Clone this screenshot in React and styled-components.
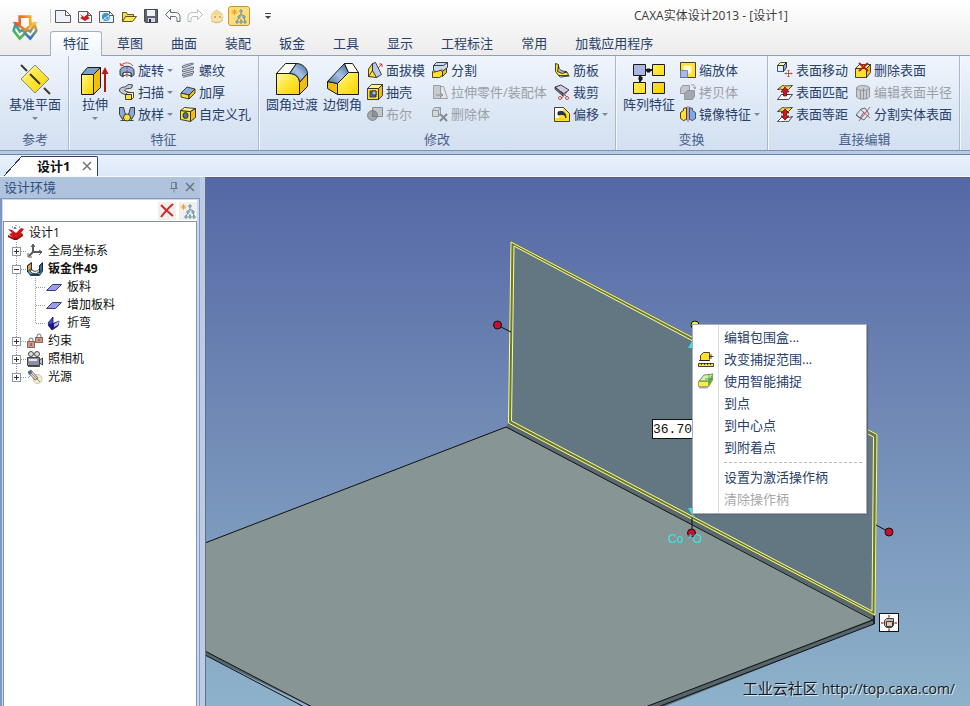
import React, { useState } from "react";
import styled, { createGlobalStyle, css } from "styled-components";

const UI_FONT = `"Open Sans", "Noto Sans CJK SC", sans-serif`;
const INK = "#28406a";
const MUTED = "#9a9fa6";

const GlobalStyle = createGlobalStyle`
  *, *::before, *::after { box-sizing: border-box; }
  html, body, #root { height: 100%; margin: 0; }
  body { overflow: hidden; font: 13px/16px ${UI_FONT}; color: ${INK}; }
  button { font: inherit; color: inherit; background: none; border: 0; padding: 0; margin: 0; white-space: nowrap; }
  ul, ol { list-style: none; margin: 0; padding: 0; }
  svg { display: block; flex: none; }
`;

/* ---------- icons ---------- */

const Glyph = ({ size = 16, box = size, label, children }) => (
  <svg width={size} height={size} viewBox={`0 0 ${box} ${box}`} aria-hidden={label ? undefined : true} aria-label={label}>
    {children}
  </svg>
);

const K = "#1b1b14";
const Y = "#ffe02a";
const YD = "#efbe10";
const YL = "#fff68c";
const B = "#8fa9d8";
const BD = "#5f80b4";

const treeArt = (
  <g fill="none" stroke="#477f96">
    <path d="M10 4v3M8 9l1-2h3l1 2M6 13l2-3M14 13l-1-3M10 13v-2" />
    <path d="M9 2h2v2h-2zM7 8h2v2h-2zM12 8h2v2h-2zM5 13h2v2h-2zM9 13h2v2h-2zM13 13h2v2h-2z" fill="#e9f2f5" />
    <path d="M3.500 1v6M.5 4h6M1.500 2l4 4M5.500 2l-4 4" stroke="#e39a18" />
  </g>
);

const ICONS = {
  newDoc: <path d="M.5 2.500h10l5 5v7h-15zM10.500 2.500v5h5" fill="#eff1f8" stroke="#33343c" />,
  newPart: (
    <g>
      <path d="M1.500 3.500h9l4 4v7h-13zM10.500 3.500v4h4" fill="#f8f9fc" stroke="#33343c" />
      <path d="M3 6l4 3 5-4-1 4 2 1-5 3-5-3 2-1z" fill="#c81c1c" />
    </g>
  ),
  newDrawing: (
    <g>
      <path d="M.5 3.500h10l4 4v7h-14zM10.500 3.500v4h4" fill="#e9f4fb" stroke="#33343c" />
      <circle cx="7" cy="9" r="4" fill="#3b92c6" />
      <path d="M4 12l7-6M6 9a2 2 0 103-1" stroke="#e4f3fb" fill="none" />
    </g>
  ),
  open: (
    <g stroke="#3a3308">
      <path d="M1.500 13.500v-9h4l1 2h6v3" fill="#f6d94b" />
      <path d="M1.500 13.500l3-5h11l-4 5z" fill="#ffe45a" />
    </g>
  ),
  save: (
    <g>
      <path d="M1.500 1.500h13v13h-12l-1-1z" fill="#5f6574" stroke="#2b2e38" />
      <path d="M4 2h8v6H4z" fill="#f0f1f5" />
      <path d="M5 10h7v4H5z" fill="#d6d9e2" />
      <path d="M6 11h2v3H6z" fill="#2b2e38" />
    </g>
  ),
  undo: <path d="M.5 6.500l5-5v3h5c3 0 4.500 2 4.500 4v5h-3v-2c0-2-1-3-2-3h-4.500v3z" fill="#fbfcfe" stroke="#3d4454" />,
  redo: <path d="M15.500 6.500l-5-5v3h-5c-3 0-4.500 2-4.500 4v5h3v-2c0-2 1-3 2-3h4.500v3z" fill="#fbfcfe" stroke="#a9adb5" />,
  ball: (
    <g>
      <circle cx="8" cy="9" r="6" fill="#f6e4a6" stroke="#dfc98e" />
      <path d="M3 7l2-4 3-2 2 3 3 3z" fill="#f0d998" />
      <circle cx="6" cy="9" r="1" fill="#b9a36a" />
      <circle cx="11" cy="9" r="1" fill="#b9a36a" />
      <path d="M2 13c3 2 9 2 12-1" stroke="#c9b98c" fill="none" />
    </g>
  ),
  treeView: treeArt,
  revolve: (
    <g>
      <path d="M1 8c2-5 12-5 14 0v5l-3 2v-4c-1-1-7-1-8 0v4l-3-2z" fill={B} stroke={K} />
      <path d="M4 11c1-1 7-1 8 0v3l-3-1-2 0-3 1z" fill="#e9eefa" stroke={K} />
      <path d="M2 3c4-3 9-3 12 1M1 1l1 3 3-1" stroke="#c81c1c" fill="none" />
      <path d="M8 5v10" stroke="#c81c1c" strokeDasharray="2 1" />
    </g>
  ),
  sweep: (
    <g stroke={K}>
      <path d="M.5 6c1-4 5-2 7-4 1-2 4-2 6-1l-1 3c-2 1-6 0-7 2 0 2 4 1 5 3l-4 2c-3-2-6-2-6-5z" fill="#c3cadb" />
      <path d="M6.500 10.500h6v5h-6z" fill={Y} />
      <path d="M6.500 10.500l2-2h6v5l-2 2v-5z" fill={YL} />
    </g>
  ),
  loft: (
    <g stroke={K}>
      <path d="M.5 1.500h4l2 7-3 5-3-5z" fill={B} />
      <path d="M15.500 1.500h-4l-2 7 3 5 3-5z" fill={B} />
      <path d="M1.500 14.500h13" fill="none" />
      <circle cx="8" cy="11.500" r="3.500" fill={Y} />
    </g>
  ),
  thread: (
    <g stroke="#4b5362" fill="#dce1ec">
      <path d="M3.500 1h9v14h-9z" stroke="none" />
      <path d="M2.500 4l10-3 1 1-11 4zM2.500 8l11-3v2l-11 3zM2.500 12l11-3v2l-11 3zM3 15.500l10-3" />
    </g>
  ),
  thicken: (
    <g stroke={K}>
      <path d="M1 9l6-6 8 2-6 6z" fill={B} />
      <path d="M1 9l8 2v4l-8-2z" fill={Y} />
      <path d="M9 11l6-6v4l-6 6z" fill={YD} />
    </g>
  ),
  hole: (
    <g stroke={K}>
      <path d="M.5 4.500l10 1v10l-10-2z" fill={Y} />
      <path d="M.5 4.500l4-3 11 1-5 3z" fill={YL} />
      <path d="M10.500 5.500l5-3v9l-5 4z" fill={YD} />
      <ellipse cx="5.500" cy="9.500" rx="2.500" ry="3" fill="#4c77ac" />
    </g>
  ),
  draft: (
    <g stroke={K}>
      <path d="M1.500 7l4-5.500v12l-4 1z" fill={Y} />
      <path d="M5.500 1.500l3-1 6 12-5 3-4-2z" fill="#b6c8ec" />
      <path d="M1.500 14.500l4-6 4 7z" fill={Y} />
      <path d="M11 6l4-4M12 2h3v3" stroke="#c81c1c" fill="none" />
    </g>
  ),
  shell: (
    <g stroke={K}>
      <path d="M.5 4.500h11v11H.5z" fill={Y} />
      <path d="M.5 4.500l4-4h11l-4 4z" fill={YL} />
      <path d="M11.500 4.500l4-4v11l-4 4z" fill={YD} />
      <path d="M3 7h6v6H3z" fill={BD} />
      <path d="M5 7v4h4V7z" fill="#a8c0ec" />
    </g>
  ),
  boolean: (
    <g stroke="#777b82">
      <circle cx="5.500" cy="9.500" r="5" fill="#a3a7ae" />
      <path d="M5.500 1.500h10v9h-10z" fill="#c3c6cb" />
      <path d="M6 4.500a5 5 0 014.500 6H5.500z" fill="#8d9198" />
    </g>
  ),
  split: (
    <g stroke={K}>
      <path d="M.5 9.500c3 2 5-2 8-1l2 1v4l-3 2h-7z" fill={Y} />
      <path d="M10.500 9.500l4-4v5l-4 4z" fill={YD} />
      <path d="M1.500 3.500l3-3h11v5l-4 3c-3-2-6 3-10 0z" fill="#c9d9f6" />
      <path d="M1.500 3.500h10l4-3" fill="none" />
    </g>
  ),
  stretch: (
    <g stroke="#8d9197" fill="#c8cbd0">
      <path d="M1.500 1.500h7v13h-7z" />
      <path d="M8.500 2.500l3 0 4 12h-7z" fill="#e4e6e9" />
      <path d="M4 11h6M8 9l3 2-3 2" stroke="#777b82" />
    </g>
  ),
  deleteBody: (
    <g stroke="#85898f" fill="#d4d7db">
      <path d="M.5 4.500h6v6h-6zM.5 4.500l2-3h6l-2 3M6.500 10.500l2-3v-6" />
      <path d="M8 8l7 7M15 8l-7 7" strokeWidth="2" />
    </g>
  ),
  rib: (
    <g stroke={K}>
      <path d="M1.500 1.500l3 1v7l9 1 1 3h-10l-3-4z" fill={Y} />
      <path d="M4.500 3.500c0 4 3 6 8 6l-4 2-5-2z" fill="#b5bccb" />
      <path d="M4.500 13.500l2 1.500 9-1" fill="none" />
    </g>
  ),
  trim: (
    <g stroke={K}>
      <path d="M1 3l6-2 8 5-6 4z" fill="#d3c9e6" />
      <path d="M1 3l8 7v2L1 5z" fill="#8289a6" />
      <path d="M7 7l7 7M13 8l-6 7" stroke="#8a3530" fill="none" />
      <circle cx="13" cy="14" r="1.500" fill="#fff" stroke="#a02a2a" />
      <circle cx="6" cy="14" r="1.500" fill="#fff" stroke="#a02a2a" />
    </g>
  ),
  offset: (
    <g>
      <path d="M.5 1.500h9l6 6v8H.5z" fill={Y} stroke={K} />
      <path d="M1 2h8v4H5v6H1z" fill="#fff" />
      <path d="M4 6c4-2 8 0 8 6-1-4-4-4-8-3z" fill="#203566" stroke="#1b1b14" />
      <path d="M3 13h9" stroke={YD} />
    </g>
  ),
  scale: (
    <g stroke={K}>
      <path d="M.5.5h15v15H.5z" fill={Y} />
      <path d="M3.500 3.500h8v8h-8z" fill="#fbf8d8" stroke="none" />
      <path d="M.5 8.500h7v7h-7z" fill="#aab8e8" stroke="#6673ac" />
    </g>
  ),
  copyBody: (
    <g stroke="#84888e" fill="#c4c7cc">
      <path d="M.5 4.500l2-3h7v5l-2 3h-7z" />
      <path d="M4.500 9.500l3-3h7v6l-2 3h-8z" fill="#a3a7ad" />
      <path d="M11 1c3-1 4 1 4 3M13 3l2 2 1-2" fill="none" />
    </g>
  ),
  mirror: (
    <g>
      <path d="M.5 6.500l3-2v-2l3-1v12l-3 1-3-2z" fill={Y} stroke={K} />
      <path d="M15.500 6.500l-3-2v-2l-3-1v12l3 1 3-2z" fill="#7ea9e8" stroke="#203566" />
      <path d="M8 0v16" stroke="#c81c1c" />
    </g>
  ),
  moveFace: (
    <g>
      <path d="M.5 3.500h6v6h-6z" fill="#e3ecfb" stroke="#203566" />
      <path d="M.5 3.500l3-3h6l-3 3z" fill={YL} stroke={K} />
      <path d="M6.500 3.500l3-3v5l-3 4z" fill={B} stroke={K} />
      <path d="M11.500 8v7M8 11.500h7M10.500 9l1-1 1 1M10.500 14l1 1 1-1M9 10.500l-1 1 1 1M14 10.500l1 1-1 1" stroke="#b8322c" fill="none" />
    </g>
  ),
  matchFace: (
    <g stroke={K}>
      <path d="M.5 15.500l4-5h11l-4 5z" fill="#fff" />
      <path d="M.5 5.500l5-4c3 1 6 0 10 0l-4 4c-4 1-7-1-11 0z" fill="#ffd94a" />
      <path d="M8 3l4 5H9.500v4h-3V8H4z" fill="#c81c1c" stroke="#6d1010" />
    </g>
  ),
  offsetFace: (
    <g stroke={K}>
      <path d="M.5 15.500l4-4c4-1 7 1 11-1l-4 5c-4-1-7 1-11 0z" fill="#fff" />
      <path d="M.5 5.500l5-4c3 1 6 0 10 0l-4 4c-4 1-7-1-11 0z" fill="#ffd94a" />
      <path d="M8 3l4 4H9.500v3H12l-4 4-4-4h2.500V7H4z" fill="#c81c1c" stroke="#6d1010" />
    </g>
  ),
  deleteFace: (
    <g stroke={K}>
      <path d="M.5 6.500h11v9H.5z" fill={Y} />
      <path d="M.5 6.500l4-4h11l-4 4z" fill={YL} />
      <path d="M11.500 6.500l4-4v8l-4 5z" fill={YD} />
      <path d="M4 1l9 8M13 1l-9 8" stroke="#b8201c" strokeWidth="2" />
    </g>
  ),
  editRadius: (
    <g stroke="#82868c" fill="#c9ccd1">
      <path d="M1.500 4v9c3 3 10 3 13 0V4" />
      <ellipse cx="8" cy="4" rx="6.500" ry="2.500" />
      <path d="M5.500 7v8M8.500 4v11M11.500 7v8" />
    </g>
  ),
  splitFace: (
    <g>
      <path d="M1 9l5-6 4-1 4 6-5 6-4-2z" fill="#dbe2f2" stroke="#474c58" />
      <path d="M1 9l4 3 4-6" fill="none" stroke="#474c58" />
      <path d="M15 1L4 15M6 4l9 8" stroke="#b83a34" fill="none" />
    </g>
  ),
  partRoot: (
    <g>
      <path d="M0 4l4 1 4 3 5-5 3 1-3 4 2 1-6 5H6L1 9l3-1z" fill="#cf1717" />
      <path d="M0 10l6 3h3l6-4v2l-6 4H6l-6-3z" fill="#8d0d0d" />
      <path d="M6 4l1-2 1 2M4 2h1M11 2h1M8 0v1" fill="none" stroke="#333" />
    </g>
  ),
  axes: (
    <g fill="none" stroke="#5b5b5b" strokeWidth="2">
      <path d="M6 2v8M6 9h9M6 9l-4 4" />
      <path d="M4 4l2-3 2 3M12 7l3 2-3 3M1 10v4h4" strokeWidth="1" />
    </g>
  ),
  sheet: (
    <g stroke="#1b1b14">
      <path d="M.5 4.500l4-3v7l-1 2c2 3 8 3 9-1v-5l3-3v9l-3 4h-9l-3-4z" fill="#4fa8d6" />
      <path d="M.5 5l4-3v5l-4 4z" fill="#e8a24a" />
      <path d="M5 1h7v8c0 3-6 3-7 0z" fill="#fff" stroke="none" />
      <path d="M4.500 8c1 3 6 3 8 0M3.500 13.500h9" fill="none" />
      <path d="M12.500 5l3-3v7l-3 3z" fill="#2f6f9d" />
    </g>
  ),
  plate: <path d="M.5 11.500l6-6h9l-6 6z" fill="#9a9cf0" stroke="#16184a" />,
  bend: (
    <g>
      <path d="M2 8l5-6v7l-1 5z" fill="#3f46d8" stroke="#11134a" />
      <path d="M6 9l7-3-1 5-6 4-4-5z" fill="#171a90" stroke="#11134a" />
      <path d="M8 9l5-3-1 4-4 2z" fill="#b8baf8" />
    </g>
  ),
  locks: (
    <g>
      <path d="M2 9V7a2 2 0 014 0v2M10 5V3a2 2 0 014 0v2" fill="none" stroke="#5b4a46" />
      <path d="M.5 8.500h7v6h-7zM8.500 4.500h7v5h-7z" fill="#cf9a8c" stroke="#6d4a42" />
      <path d="M4 10v3M12 6v2" stroke="#6d1d16" />
    </g>
  ),
  camera: (
    <g>
      <circle cx="4" cy="3" r="2.500" fill="#ddd" stroke="#222" />
      <circle cx="10" cy="3" r="2.500" fill="#ddd" stroke="#222" />
      <path d="M.5 6.500h12v8H.5z" fill="#8b8fa2" stroke="#222" />
      <path d="M2 8h8v2H2z" fill="#e4e5ec" />
      <path d="M12.500 9l3-2v7l-3-2z" fill="#b9bbc8" stroke="#222" />
      <path d="M1 15.500h12" stroke="#222" />
    </g>
  ),
  light: (
    <g>
      <circle cx="10.500" cy="10" r="4.500" fill="#f5ead2" stroke="#c9b694" />
      <path d="M1 3l3-2 7 8-3 2z" fill="#e6d6d0" stroke="#8a4a42" />
      <path d="M1 3l3-2 1 3-3 2z" fill="#3f6d9a" />
      <path d="M4 4l9 9M1 9l3-3" stroke="#3f8f78" />
    </g>
  ),
  snapRange: (
    <g stroke={K}>
      <path d="M2.500 4.500l3-3h6v7l-1 1h-8z" fill={Y} />
      <path d="M11.500 5.500h4M13 3v5M1 9.500h11" />
      <path d="M.5 12.500h15v3H.5z" fill={Y} />
      <path d="M3.500 12v2M6.500 12v2M9.500 12v2M12.500 12v2" />
    </g>
  ),
  smartSnap: (
    <g>
      <path d="M1 8l5-6 9-1-4 7z" fill="#d6f0b8" stroke="#4d7a2a" />
      <path d="M.5 8.500h10v5H.5z" fill="#f2ee4c" stroke="#8f8b2a" />
      <path d="M11 8l4-7v6l-4 7z" fill="#8fa04d" />
      <path d="M1 14.500h9" stroke="#a9a9a9" strokeWidth="2" />
      <path d="M11 2v8M7 6h8" stroke="#14a83a" />
    </g>
  ),
  close: <path d="M4 4l8 8M12 4l-8 8" stroke="#6c7482" strokeWidth="1.500" />,
  pin: <path d="M5.500 3.500h5v6h-5zM9.500 3.500v6M4 9.500h8M8 9.500v4" fill="none" stroke="#6c7482" />,
  clear: <path d="M2 2c4 4 7 7 12 11M14 1C9 5 6 9 2 14" fill="none" stroke="#cf2a24" strokeWidth="2" />,
  moveBox: (
    <g>
      <path d="M3.500 5.500l2-2h7v7l-2 2h-5l-2-2z" fill="#c9b4b0" stroke={K} />
      <path d="M5.500 6.500h6v5h-6z" fill="#d9c8c4" stroke={K} />
      <path d="M8 0v3M8 13v3M0 8h3M13 8h3M7 1h2M7 15h2M1 7v2M15 7v2" stroke="#b8201c" />
    </g>
  ),
};

const Icon = ({ name }) => (
  <Glyph>
    <g strokeWidth=".8">{ICONS[name]}</g>
  </Glyph>
);

const BIG = {
  plane: (
    <g>
      <path d="M2 16L16 2l14 14-14 14z" fill="url(#gold)" stroke="#7c8791" />
      <path d="M2 2l6 6M11 11l10 10M25 25l6 6" stroke="#3d3a2a" strokeWidth="2" />
    </g>
  ),
  extrude: (
    <g stroke={K}>
      <path d="M2.500 11.500h12v20h-12z" fill="url(#gold)" />
      <path d="M2.500 11.500l6-7h13l-7 7z" fill="#7da0cc" />
      <path d="M14.500 11.500l7-7v20l-7 7z" fill={YD} />
      <path d="M26 29V8" stroke="#b81414" strokeWidth="2" />
      <path d="M22.500 11L26 4l3.500 7z" fill="#c01818" stroke="none" />
    </g>
  ),
  fillet: (
    <g stroke={K}>
      <path d="M.5 10.500h13c6 0 10 4 10 9v12H.5z" fill="url(#gold)" />
      <path d="M.5 10.500l9-10h11l-7 10z" fill="#fffef2" />
      <path d="M13.500 10.500l7-10c6 0 11 5 11 10l-8 9c0-5-4-9-10-9z" fill="url(#steel)" />
      <path d="M23.500 19.500l8-9v13l-8 8z" fill={YD} />
    </g>
  ),
  chamfer: (
    <g stroke={K}>
      <path d="M10.500 20.500l11-11h10v22h-21z" fill="url(#gold)" />
      <path d="M.5 18.500l10 2v11l-10-6z" fill={YD} />
      <path d="M.5 18.500l17-18 4 9-11 11z" fill="url(#steel)" />
      <path d="M17.500.5h8l6 9h-10z" fill="#fffef2" />
    </g>
  ),
  pattern: (
    <g stroke={K}>
      <path d="M12 7h8M7 12v8" strokeWidth="2" />
      <path d="M.5 1.500h12v11H.5z" fill="#a9b6e6" />
      <path d="M19.500 1.500h12v11h-12zM.5 19.500h12v11H.5zM19.500 19.500h12v11h-12z" fill="url(#gold)" />
      <path d="M14 6h3v3h-3zM6 14h3v3H6z" fill={K} />
    </g>
  ),
};

const Logo = () => (
  <Glyph size={28} box={32} label="CAXA">
    <defs>
      <linearGradient id="lg1" x1="0" x2="1"><stop offset="0" stopColor="#e8502a" /><stop offset="1" stopColor="#f6c52c" /></linearGradient>
      <linearGradient id="lg2" x1="0" x2="0" y2="1"><stop offset="0" stopColor="#2f9fb2" /><stop offset="1" stopColor="#57b847" /></linearGradient>
      <linearGradient id="lg3" x1="0" x2="0" y2="1"><stop offset="0" stopColor="#f0a82c" /><stop offset="1" stopColor="#1f76c8" /></linearGradient>
    </defs>
    <g fill="#fdfdfb" strokeWidth="3">
      <path d="M5 12l-2 7 7 9 6-6-2-4-4 2z" stroke="url(#lg2)" />
      <path d="M27 12l2 7-7 9-6-6 2-4 4 2z" stroke="url(#lg3)" />
      <path d="M10 3h12v8h4l-10 7-10-7h4z" stroke="url(#lg1)" />
    </g>
  </Glyph>
);

/* ---------- title bar and ribbon tabs ---------- */

const Window = styled.div`
  display: flex;
  flex-direction: column;
  height: 100vh;
  background: #c9d8ec;
`;

const Head = styled.header`
  display: flex;
  flex: none;
  background: linear-gradient(#ffffff, #f6f6f6 45%, #ececee);
  border-bottom: 1px solid #8ea0bb;
`;

const AppButton = styled.button`
  flex: none;
  width: 50px;
  display: grid;
  place-items: center;
`;

const HeadMain = styled.div`
  flex: 1;
  min-width: 0;
`;

const TitleBar = styled.div`
  display: grid;
  grid-template-columns: 1fr auto 1fr;
  align-items: center;
  height: 31px;
`;

const QuickAccess = styled.div`
  display: flex;
  align-items: center;
  gap: 6px;
  padding-left: 4px;
  border-left: 1px solid #c5c8ce;
  height: 14px;
`;

const QuickButton = styled.button`
  display: grid;
  place-items: center;
  width: 16px;
  height: 20px;
  ${(p) => p.$active && css`
    width: 22px;
    border: 1px solid #c9962c;
    border-radius: 3px;
    background: #ffdd7a;
    margin: 0 4px 0 -3px;
  `}
`;

const Title = styled.h1`
  grid-column: 3;
  margin: 0;
  padding-left: 124px;
  font-size: 12px;
  font-weight: 400;
  line-height: 16px;
  color: #3c3c3c;
  white-space: nowrap;
`;

const TabRow = styled.div`
  display: flex;
  gap: 2px;
`;

const Tab = styled.button`
  height: 24px;
  padding: 0 12px 2px;
  border: 1px solid transparent;
  border-bottom: 0;
  border-radius: 3px 3px 0 0;
  ${(p) => p.$active && css`
    position: relative;
    height: 25px;
    padding-bottom: 3px;
    border-color: #9fb1cb;
    background: linear-gradient(#ffffff, #eef4fc);
    margin-bottom: -1px;
  `}
`;

/* ---------- ribbon ---------- */

const Ribbon = styled.section`
  display: flex;
  flex: none;
  height: 95px;
  background: linear-gradient(#f0f5fc, #dfe9f6 50%, #d3e0f1);
  border-bottom: 1px solid #8093b0;
`;

const Group = styled.section`
  border-right: 1px solid #a9b8cf;
  box-shadow: 1px 0 0 #f4f8fd;
  padding: 3px 7px 0 ${(p) => (p.$lead ? "9px" : "7px")};
`;

const GroupBody = styled.div`
  display: flex;
  gap: 5px;
  min-height: 66px;
`;

const GroupLabel = styled.h2`
  margin: 0;
  padding-top: 5px;
  font-size: 13px;
  font-weight: 400;
  line-height: 18px;
  text-align: center;
  color: #47608a;
`;

const Columns = styled.div`
  display: flex;
  gap: 7px;
`;

const Column = styled.div`
  display: flex;
  flex-direction: column;
  align-items: flex-start;
`;

const SmallButton = styled.button`
  display: flex;
  align-items: center;
  gap: 3px;
  height: 22px;
  &:disabled { color: ${MUTED}; }
`;

const BigButton = styled.button`
  display: flex;
  flex-direction: column;
  align-items: center;
  gap: 1px;
  min-width: 38px;
  padding-top: 4px;
`;

const Caret = styled.span`
  border: 3px solid transparent;
  border-top-color: #7e8795;
  border-bottom-width: 0;
  margin-top: ${(p) => (p.$below ? "4px" : "0")};
`;

/* ---------- document tabs ---------- */

const DocTabs = styled.nav`
  display: flex;
  flex: none;
  height: 26px;
  padding: 5px 0 0 4px;
  background: linear-gradient(#b9cbe4 3px, #6f84a5 3px, #6f84a5 4px, #e9f1fb 4px, #dce8f7);
  border-bottom: 1px solid #f4f7fb;
`;

const DocTab = styled.div`
  display: flex;
  align-items: center;
  height: 20px;
`;

const DocSlope = styled.span`
  width: 18px;
  height: 20px;
  background: linear-gradient(to bottom right, transparent 48%, #33415a 48%, #33415a 52%, #fff 52%);
`;

const DocBody = styled.div`
  display: flex;
  align-items: center;
  gap: 9px;
  height: 20px;
  padding: 0 2px 2px 15px;
  background: #fff;
  border: 1px solid #33415a;
  border-width: 1px 1px 0 0;
  border-top-right-radius: 2px;
  color: #111;
  font-weight: 700;
`;

/* ---------- design tree ---------- */

const Workspace = styled.div`
  display: flex;
  flex: 1;
  min-height: 0;
`;

const SidePanel = styled.aside`
  display: flex;
  flex-direction: column;
  flex: none;
  width: 206px;
  background: #bccbe6;
  border-right: 1px solid #66707f;
  padding-right: 5px;
`;

const PanelHead = styled.div`
  display: flex;
  align-items: center;
  flex: none;
  height: 21px;
  padding: 0 2px 2px 4px;
  background: #afc3dc;
`;

const PanelTitle = styled.h2`
  flex: 1;
  margin: 0;
  font-size: 13px;
  font-weight: 400;
  line-height: 16px;
  color: #31507f;
`;

const PanelBody = styled.div`
  display: flex;
  flex-direction: column;
  flex: 1;
  min-height: 0;
  border: solid #7d98c4;
  border-width: 1px 1px 0 2px;
  background: #c9d8ee;
  padding: 1px 2px 0 1px;
`;

const SearchRow = styled.form`
  display: flex;
  align-items: center;
  gap: 3px;
  height: 21px;
  flex: none;
  background: #fff;
`;

const SearchInput = styled.input`
  flex: 1;
  min-width: 0;
  height: 18px;
  border: 0;
  outline: 0;
  background: #fff;
  font: 12px/16px ${UI_FONT};
`;

const IconButton = styled.button`
  display: grid;
  place-items: center;
  width: ${(p) => (p.$soft ? "18px" : "16px")};
  height: 18px;
  background: ${(p) => (p.$soft ? "#f0efee" : "none")};
`;

const Tree = styled.ul`
  flex: 1;
  padding: 2px 0 0 4px;
  background: #fff;
  border: 1px solid #8493a8;
  border-bottom: 0;
  font-size: 12px;
  color: #111;
`;

const TreeRow = styled.li`
  display: flex;
  align-items: center;
  height: 18px;
  font-weight: ${(p) => (p.$bold ? 700 : 400)};
`;

const TreeText = styled.span`
  margin-left: 5px;
  white-space: nowrap;
`;

const dotsV = "repeating-linear-gradient(#9a9a9a 0 1px, transparent 1px 2px)";
const dotsH = "repeating-linear-gradient(90deg, #9a9a9a 0 1px, transparent 1px 2px)";

const Guide = styled.span`
  display: flex;
  align-items: center;
  flex: none;
  width: 19px;
  height: 18px;
  padding-left: 4px;
  background:
    ${dotsV} 8px 0 / 1px ${(p) => (p.$last ? "9px" : "18px")} no-repeat,
    ${dotsH} 9px 9px / ${(p) => (p.$branch ? "9px" : "0")} 1px no-repeat;
`;

const Expander = styled.button`
  width: 9px;
  height: 9px;
  border: 1px solid #8c97a8;
  background:
    linear-gradient(#333, #333) 1px 3px / 5px 1px no-repeat,
    linear-gradient(#333, #333) 3px 1px / 1px ${(p) => (p.$open ? "0" : "5px")} no-repeat,
    #fff;
`;

/* ---------- 3D view ---------- */

const Viewport = styled.main`
  position: relative;
  flex: 1;
  min-width: 0;
  overflow: hidden;
  border-top: 1px solid #55607a;
  background: linear-gradient(#5568a6, #7089b5 45%, #8eb2cb);
`;

const Scene = styled.svg`
  position: absolute;
  inset: 0;
  width: 100%;
  height: 100%;
`;

const Dimension = styled.output`
  position: absolute;
  left: 446px;
  top: 241px;
  height: 20px;
  width: 60px;
  border: 1px solid #111;
  background: #fff;
  color: #111;
  font: 13px/20px "Liberation Mono", monospace;
`;

const MoveHandle = styled.button`
  position: absolute;
  left: 673px;
  top: 435px;
  display: grid;
  place-items: center;
  width: 20px;
  height: 19px;
  border: 1px solid #111;
  background: #fff;
`;

const Menu = styled.ul`
  position: absolute;
  left: 486px;
  top: 146px;
  width: 175px;
  padding: 1px 3px 3px 0;
  border: 1px solid #a9adb4;
  box-shadow: 1px 1px 1px #5b6577;
  background: linear-gradient(90deg, transparent 25px, #dcdde0 25px, #dcdde0 26px, transparent 26px) #fff;
`;

const MenuButton = styled.button`
  display: grid;
  grid-template-columns: 16px 1fr;
  column-gap: 10px;
  align-items: center;
  width: 100%;
  height: 22px;
  padding: 0 0 1px 5px;
  text-align: left;
  &:disabled { color: #a9a9a9; }
`;

const MenuLabel = styled.span`
  grid-column: 2;
`;

const MenuRule = styled.li`
  height: 8px;
  margin-left: 31px;
  background: repeating-linear-gradient(90deg, #bbb 0 3px, transparent 3px 5px) 0 4px / 100% 1px no-repeat;
`;

const Watermark = styled.p`
  position: absolute;
  right: 15px;
  bottom: 7px;
  margin: 0;
  font: 14px/20px ${UI_FONT};
  color: #15181c;
  text-shadow: 1px 1px 0 #dfe9f0;
  white-space: nowrap;
`;

const WatermarkName = styled.span`
  font-size: 15px;
  margin-right: 4px;
`;

/* ---------- data ---------- */

const QUICK = [
  ["newDoc", "新建"], ["newPart", "新建设计"], ["newDrawing", "新建图纸"], ["open", "打开"], ["save", "保存"],
  ["undo", "撤销"], ["redo", "重做"], ["ball", "三维球"], ["treeView", "设计树", true],
];

const TABS = ["特征", "草图", "曲面", "装配", "钣金", "工具", "显示", "工程标注", "常用", "加载应用程序"];

const GROUPS = [
  { name: "参考", lead: true, big: [{ icon: "plane", text: "基准平面", menu: true }], cols: [] },
  {
    name: "特征", big: [{ icon: "extrude", text: "拉伸", menu: true }],
    cols: [
      [["revolve", "旋转", "m"], ["sweep", "扫描", "m"], ["loft", "放样", "m"]],
      [["thread", "螺纹"], ["thicken", "加厚"], ["hole", "自定义孔"]],
    ],
  },
  {
    name: "修改", big: [{ icon: "fillet", text: "圆角过渡" }, { icon: "chamfer", text: "边倒角" }],
    cols: [
      [["draft", "面拔模"], ["shell", "抽壳"], ["boolean", "布尔", "d"]],
      [["split", "分割"], ["stretch", "拉伸零件/装配体", "d"], ["deleteBody", "删除体", "d"]],
      [["rib", "筋板"], ["trim", "裁剪"], ["offset", "偏移", "m"]],
    ],
  },
  {
    name: "变换", big: [{ icon: "pattern", text: "阵列特征" }],
    cols: [[["scale", "缩放体"], ["copyBody", "拷贝体", "d"], ["mirror", "镜像特征", "m"]]],
  },
  {
    name: "直接编辑", lead: true, big: [],
    cols: [
      [["moveFace", "表面移动"], ["matchFace", "表面匹配"], ["offsetFace", "表面等距"]],
      [["deleteFace", "删除表面"], ["editRadius", "编辑表面半径", "d"], ["splitFace", "分割实体表面"]],
    ],
  },
];

const CHILDREN = [["plate", "板料"], ["plate", "增加板料"], ["bend", "折弯"]];

const MENU = [
  { text: "编辑包围盒..." },
  { text: "改变捕捉范围...", icon: "snapRange" },
  { text: "使用智能捕捉", icon: "smartSnap" },
  { text: "到点" },
  { text: "到中心点" },
  { text: "到附着点" },
  null,
  { text: "设置为激活操作柄" },
  { text: "清除操作柄", off: true },
];

/* ---------- parts ---------- */

const RibbonGroup = ({ name, lead, big, cols }) => (
  <Group $lead={lead} aria-label={name}>
    <GroupBody>
      {big.map((b) => (
        <BigButton key={b.text}>
          <Glyph size={32}>{BIG[b.icon]}</Glyph>
          {b.text}
          {b.menu && <Caret $below />}
        </BigButton>
      ))}
      {cols.length > 0 && (
        <Columns>
          {cols.map((col) => (
            <Column key={col[0][1]}>
              {col.map(([icon, text, flag]) => (
                <SmallButton key={text} disabled={flag === "d"}>
                  <Icon name={icon} />
                  {text}
                  {flag === "m" && <Caret />}
                </SmallButton>
              ))}
            </Column>
          ))}
        </Columns>
      )}
    </GroupBody>
    <GroupLabel>{name}</GroupLabel>
  </Group>
);

const Branch = ({ icon, text, open, last, bold, onToggle }) => (
  <TreeRow $bold={bold}>
    <Guide $branch $last={last}>
      <Expander $open={open} onClick={onToggle} aria-label={`展开 ${text}`} aria-expanded={!!open} />
    </Guide>
    <Icon name={icon} />
    <TreeText>{text}</TreeText>
  </TreeRow>
);

const DesignTree = () => {
  const [open, setOpen] = useState(true);
  return (
    <Tree>
      <TreeRow>
        <Icon name="partRoot" />
        <TreeText>设计1</TreeText>
      </TreeRow>
      <Branch icon="axes" text="全局坐标系" />
      <Branch icon="sheet" text="钣金件49" bold open={open} onToggle={() => setOpen(!open)} />
      {open && CHILDREN.map(([icon, text], i) => (
        <TreeRow key={text}>
          <Guide />
          <Guide $branch $last={i === CHILDREN.length - 1} />
          <Icon name={icon} />
          <TreeText>{text}</TreeText>
        </TreeRow>
      ))}
      <Branch icon="locks" text="约束" />
      <Branch icon="camera" text="照相机" />
      <Branch icon="light" text="光源" last />
    </Tree>
  );
};

const Model = () => (
  <Scene aria-label="钣金件模型">
    <g transform="translate(-206 -178)">
      <path d="M205 543L506 427 874 618 873 624 640 716H330L205 655z" fill="#56656c" />
      <path d="M205 543L506 427 873 619 640 709H315L205 651z" fill="#879694" />
      <path d="M506 427L509 422 875 613 874 619z" fill="#5a6970" />
      <path d="M205 543L506 427 873 620 640 709M205 651L320 711M205 655L312 711M874 624L650 710" fill="none" stroke="#111" />
      <path d="M874 612v12" stroke="#222" strokeWidth="2" />
      <path d="M512 243L877 435 874 614 509 423z" fill="#637783" />
      <path d="M512 243L876 435 874 614 510 422z" fill="none" stroke="#6d7a2c" strokeWidth="3" />
      <g fill="none" stroke="#fbfb9a">
        <path d="M511 242L877 434.500 875 615 508.500 423z" />
        <path d="M514 246L873.500 437 872 611 511.500 421z" />
      </g>
      <g stroke="#111">
        <path d="M497 325l14 7M876 525l13 7M692 518v15" />
        <circle cx="497.500" cy="325" r="4" fill="#c8102e" />
        <circle cx="889" cy="532" r="4" fill="#c8102e" />
        <circle cx="691.500" cy="533" r="4" fill="#c8102e" />
        <circle cx="695" cy="325" r="4" fill="#f3ee2c" />
      </g>
      <path d="M688 348l6-10v10zM688 508h8l-2 10z" fill="#33e6ea" />
      <g fill="#33e6ea" fontFamily="Liberation Sans, sans-serif" fontSize="12">
        <text x="668" y="543">Co</text>
        <text x="688" y="543">*O</text>
      </g>
    </g>
  </Scene>
);

const SharedGradients = () => (
  <defs>
    <linearGradient id="gold" x1="0" y1="0" x2="1" y2="1">
      <stop offset="0" stopColor="#fff9a0" /><stop offset=".5" stopColor="#ffe535" /><stop offset="1" stopColor="#f5cf00" />
    </linearGradient>
    <linearGradient id="steel" x1="0" y1="1" x2="1" y2="0">
      <stop offset="0" stopColor="#4f75a4" /><stop offset=".5" stopColor="#a9c3e6" /><stop offset="1" stopColor="#3f6390" />
    </linearGradient>
  </defs>
);

const GradientHost = styled.svg`
  position: absolute;
  width: 0;
  height: 0;
`;

export default function App() {
  const [tab, setTab] = useState(TABS[0]);
  return (
    <Window>
      <GlobalStyle />
      <GradientHost aria-hidden="true"><SharedGradients /></GradientHost>
      <Head>
        <AppButton aria-label="应用程序菜单"><Logo /></AppButton>
        <HeadMain>
          <TitleBar>
            <QuickAccess>
              {QUICK.map(([icon, label, active]) => (
                <QuickButton key={icon} aria-label={label} $active={active}><Icon name={icon} /></QuickButton>
              ))}
              <QuickButton aria-label="自定义快速访问工具栏">
                <Glyph><path d="M5 5.500h6" stroke="#444" /><path d="M5 8h6l-3 3z" fill="#444" /></Glyph>
              </QuickButton>
            </QuickAccess>
            <Title>CAXA实体设计2013 - [设计1]</Title>
          </TitleBar>
          <TabRow role="tablist">
            {TABS.map((t) => (
              <Tab key={t} role="tab" aria-selected={t === tab} $active={t === tab} onClick={() => setTab(t)}>{t}</Tab>
            ))}
          </TabRow>
        </HeadMain>
      </Head>
      <Ribbon>{GROUPS.map((g) => <RibbonGroup key={g.name} {...g} />)}</Ribbon>
      <DocTabs>
        <DocTab>
          <DocSlope />
          <DocBody>
            设计1
            <IconButton aria-label="关闭文档"><Icon name="close" /></IconButton>
          </DocBody>
        </DocTab>
      </DocTabs>
      <Workspace>
        <SidePanel>
          <PanelHead>
            <PanelTitle>设计环境</PanelTitle>
            <IconButton aria-label="固定面板"><Icon name="pin" /></IconButton>
            <IconButton aria-label="关闭面板"><Icon name="close" /></IconButton>
          </PanelHead>
          <PanelBody>
            <SearchRow>
              <SearchInput aria-label="搜索设计树" />
              <IconButton type="reset" $soft aria-label="清除搜索"><Icon name="clear" /></IconButton>
              <IconButton type="button" $soft aria-label="查找"><Icon name="treeView" /></IconButton>
            </SearchRow>
            <DesignTree />
          </PanelBody>
        </SidePanel>
        <Viewport>
          <Model />
          <Dimension>36.70</Dimension>
          <MoveHandle aria-label="移动"><Icon name="moveBox" /></MoveHandle>
          <Menu>
            {MENU.map((m, i) => m ? (
              <li key={m.text}>
                <MenuButton disabled={m.off}>
                  {m.icon && <Icon name={m.icon} />}
                  <MenuLabel>{m.text}</MenuLabel>
                </MenuButton>
              </li>
            ) : <MenuRule key={i} role="separator" />)}
          </Menu>
          <Watermark><WatermarkName>工业云社区</WatermarkName>http://top.caxa.com/</Watermark>
        </Viewport>
      </Workspace>
    </Window>
  );
}
